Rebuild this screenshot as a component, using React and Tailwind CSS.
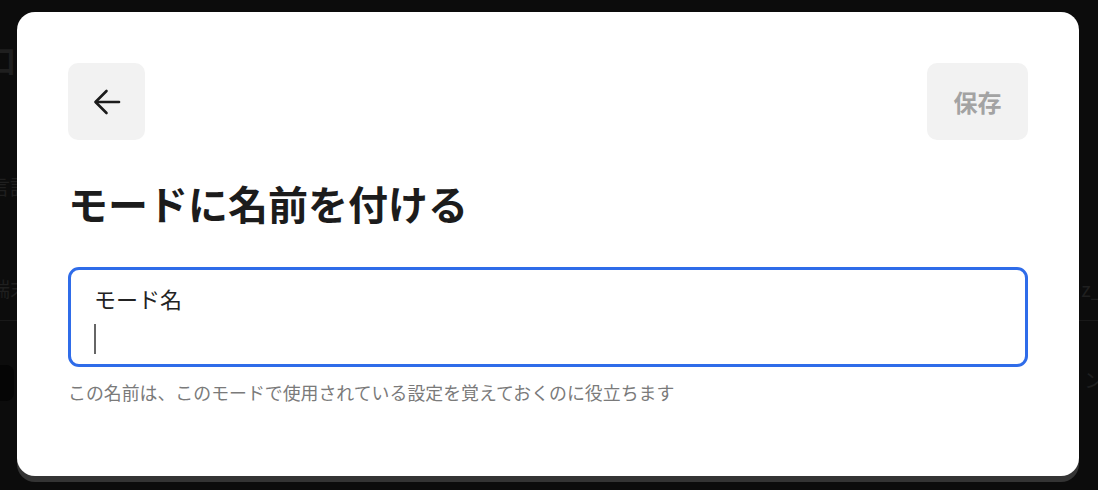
const font = { fontFamily: '"Noto Sans CJK JP", "Noto Sans", sans-serif' };

function BackArrow() {
  return (
    <svg width="28" height="28" viewBox="0 0 28 28" fill="none" stroke="currentColor" strokeWidth="2.6" strokeLinecap="round" strokeLinejoin="round">
      <path d="M26 14H3" />
      <path d="M13.5 3L2.5 14l11 11" />
    </svg>
  );
}

function BackgroundPage() {
  // dimmed page behind the overlay, only the edges show
  return (
    <div className="h-[490px] w-full bg-[#0c0c0c] text-[#1f1f1f] overflow-hidden">
      <div className="flex justify-between pt-[44px]">
        <span className="-ml-[14px] text-[30px] font-bold leading-none">口</span>
      </div>
      <div className="mt-[98px] -ml-[10px] text-[20px]">言語</div>
      <div className="mt-[72px] flex justify-between text-[20px]">
        <span className="-ml-[10px]">端末</span>
        <span className="-mr-[4px]">z_</span>
      </div>
      <div className="mt-[16px] h-px w-full bg-[#191919]" />
      <div className="mt-[44px] flex justify-between">
        <div className="-ml-[10px] h-[36px] w-[24px] rounded-lg bg-[#050505]" />
        <span className="-mr-[6px] text-[20px]">ン</span>
      </div>
    </div>
  );
}

export default function App() {
  return (
    <div className="relative h-[490px] w-[1098px] overflow-hidden" style={font}>
      <BackgroundPage />

      {/* modal */}
      <div className="absolute left-[17px] top-[12px] w-[1062px] h-[464px] rounded-[18px] bg-white shadow-[0_6px_0_0_#343434] px-[51px] pt-[51px]">
        <div className="flex items-center justify-between">
          <button className="flex h-[77px] w-[77px] items-center justify-center rounded-[10px] bg-[#f2f2f2] text-[#1c1c1c]">
            <BackArrow />
          </button>
          <button className="flex h-[77px] w-[101px] items-center justify-center rounded-[10px] bg-[#f2f2f2] text-[24px] font-bold text-[#a3a3a3]">
            保存
          </button>
        </div>

        <h1 className="mt-[39px] text-[40px] font-bold leading-[48px] text-[#1c1c1c]">
          モードに名前を付ける
        </h1>

        <div className="mt-[40px] h-[100px] rounded-[11px] border-[3px] border-[#2f6ce9] pl-[23px] pt-[13px]">
          <div className="text-[22px] leading-[30px] text-[#222]">モード名</div>
          <div className="mt-[11px] h-[30px] w-[2px] bg-[#666]" />
        </div>

        <p className="mt-[13px] text-[17.9px] leading-[25px] text-[#7a7a7a]">
          この名前は、このモードで使用されている設定を覚えておくのに役立ちます
        </p>
      </div>
    </div>
  );
}
